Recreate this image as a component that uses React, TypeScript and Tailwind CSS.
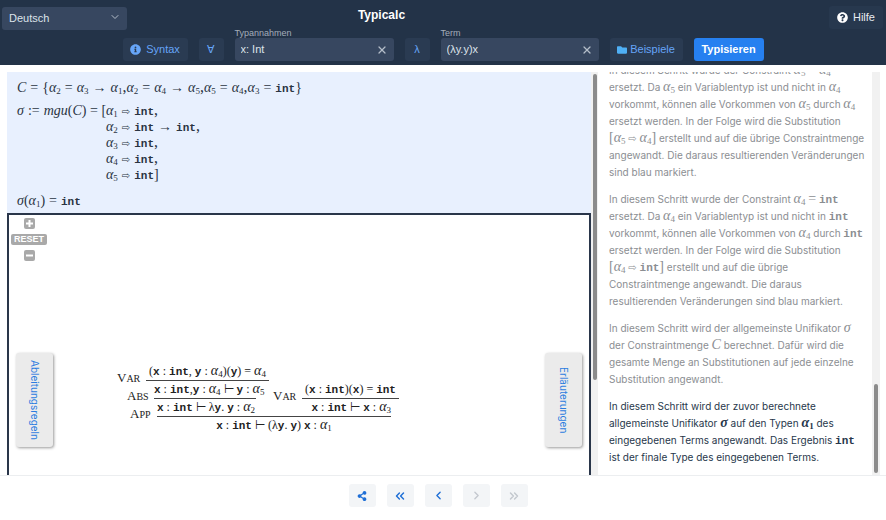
import React from "react";
import { ChevronDown, ChevronLeft, ChevronRight, ChevronsLeft, ChevronsRight, X } from "lucide-react";
import { FaShareAlt, FaInfoCircle, FaQuestionCircle, FaFolder } from "react-icons/fa";

type Kids = { children?: React.ReactNode };

const Tt = ({ children }: Kids) => (
  <span className="font-['Liberation_Mono',monospace] text-[11px] leading-[0px] font-bold">{children}</span>
);

const It = ({ children }: Kids) => <i className="font-['Liberation_Serif',serif] text-[14px] leading-[0px]">{children}</i>;

const Rm = ({ children }: Kids) => <span className="font-['Liberation_Serif',serif] text-[14px] leading-[0px]">{children}</span>;

const Alpha = ({ n }: { n: number }) => (
  <span className="font-['Liberation_Serif',serif] leading-[0px] whitespace-nowrap">
    <i className="text-[14px]">α</i>
    <sub className="text-[9px]">{n}</sub>
  </span>
);

const Maps = () => <span className="font-['DejaVu_Sans',sans-serif] text-[10px] leading-[0px]">⇨</span>;

const Int = () => <Tt>int</Tt>;

function Field({ id, label, value, width }: { id: string; label: string; value: string; width: string }) {
  return (
    <div className={width}>
      <label htmlFor={id} className="block text-[9px] leading-[10px] text-[#a3adba]">
        {label}
      </label>
      <div className="flex h-[23px] items-center rounded-[3px] bg-[#374760] pr-[6px] pl-[6px]">
        <input id={id} defaultValue={value} className="w-full min-w-0 bg-transparent text-[11px] text-[#dde3ea] outline-none" />
        <button aria-label="Leeren" className="text-[#b4bdc9]">
          <X size={12} strokeWidth={2.5} />
        </button>
      </div>
    </div>
  );
}

const darkButton = "flex h-[23px] items-center justify-center rounded-[3px] bg-[#2a3b52] text-[11px] text-[#66a5f8]";

function Header() {
  return (
    <header className="bg-[#233348] pt-[5px] pb-[4px]">
      <div className="grid h-[23px] grid-cols-[1fr_auto_1fr] items-center pr-[3px] pl-[2px]">
        <div className="relative w-[125px]">
          <select aria-label="Sprache" className="h-[23px] w-full appearance-none rounded-[3px] bg-[#374760] pl-[7px] text-[11px] text-[#dde3ea]">
            <option>Deutsch</option>
            <option>English</option>
          </select>
          <ChevronDown size={12} className="pointer-events-none absolute top-[6px] right-[6px] text-[#b4bdc9]" />
        </div>
        <h1 className="mr-[122px] self-start text-[12px] leading-[20px] font-bold text-white">Typicalc</h1>
        <button className="flex h-[23px] w-[54px] items-center justify-center gap-[5px] justify-self-end rounded-[3px] bg-[#27384e] text-[11px] text-[#e8ecf1]">
          <FaQuestionCircle size={11} className="text-white" />
          Hilfe
        </button>
      </div>
      <div className="flex items-end justify-center gap-[11px]">
        <button className={`${darkButton} w-[65px] gap-[5px]`}>
          <FaInfoCircle size={11} />
          Syntax
        </button>
        <button className={`${darkButton} w-[25px]`}>∀</button>
        <Field id="types" label="Typannahmen" value="x: Int" width="w-[159px]" />
        <button className={`${darkButton} w-[25px]`}>λ</button>
        <Field id="term" label="Term" value="(λy.y)x" width="w-[158px]" />
        <button className={`${darkButton} w-[73px] gap-[3px]`}>
          <FaFolder size={10} className="text-[#4fb0f5]" />
          Beispiele
        </button>
        <button className="h-[23px] w-[70px] rounded-[3px] bg-[#2680f0] text-[11px] font-bold text-white">Typisieren</button>
      </div>
    </header>
  );
}

function Constraints() {
  return (
    <section className="h-[141px] bg-[#e8f0fe] pt-[7px] pl-[10px] font-['Liberation_Serif',serif] text-[16px] leading-[16px] text-[#2a3442]">
      <p className="whitespace-nowrap">
        <It>C</It> <Rm>=</Rm> <Rm>{"{"}</Rm>
        <Alpha n={2} /> <Rm>=</Rm> <Alpha n={3} /> <Rm>→</Rm> <Alpha n={1} />,<Alpha n={2} /> <Rm>=</Rm> <Alpha n={4} /> <Rm>→</Rm>{" "}
        <Alpha n={5} />,<Alpha n={5} /> <Rm>=</Rm> <Alpha n={4} />,<Alpha n={3} /> <Rm>=</Rm> <Int />
        <Rm>{"}"}</Rm>
      </p>
      <div className="mt-[7px] grid w-max grid-cols-[auto_auto]">
        <p className="w-[89px] whitespace-nowrap">
          <It>σ</It> <Rm>:=</Rm> <It>mgu</It><Rm>(</Rm><It>C</It><Rm>) = [</Rm>
        </p>
        <div>
          <p><Alpha n={1} /> <Maps /> <Int />,</p>
          <p><Alpha n={2} /> <Maps /> <Int /> <Rm>→</Rm> <Int />,</p>
          <p><Alpha n={3} /> <Maps /> <Int />,</p>
          <p><Alpha n={4} /> <Maps /> <Int />,</p>
          <p><Alpha n={5} /> <Maps /> <Int /><Rm>]</Rm></p>
        </div>
      </div>
      <p className="mt-[10px]">
        <It>σ</It><Rm>(</Rm><Alpha n={1} /><Rm>)</Rm> <Rm>=</Rm> <Int />
      </p>
    </section>
  );
}

const RuleName = ({ children, width }: Kids & { width: string }) => (
  <span className={`${width} translate-y-[6px] text-[13px]`}>
    {children}
  </span>
);

const Small = ({ children }: Kids) => <span className="text-[10px]">{children}</span>;

function ProofTree() {
  return (
    <div className="mt-[10px] w-[282px] font-['Liberation_Serif',serif] text-[12px] leading-[17px] whitespace-nowrap text-[#222]">
      <div className="flex h-[18px]">
        <RuleName width="w-[29px]">V<Small>AR</Small></RuleName>
        <span className="w-[123px] border-b border-[#444] text-center">
          (<Tt>x</Tt> : <Tt>int</Tt>, <Tt>y</Tt> : <Alpha n={4} />)(<Tt>y</Tt>) = <Alpha n={4} />
        </span>
      </div>
      <div className="flex h-[18px] pl-[10px]">
        <RuleName width="w-[27px]">A<Small>BS</Small></RuleName>
        <span className="w-[102px] border-b border-[#444]">
          <Tt>x</Tt> : <Tt>int</Tt>,<Tt>y</Tt> : <Alpha n={4} /> ⊢ <Tt>y</Tt> : <Alpha n={5} />
        </span>
        <span className="w-[17px]" />
        <RuleName width="w-[29px]">V<Small>AR</Small></RuleName>
        <span className="w-[97px] border-b border-[#444] text-center">
          (<Tt>x</Tt> : <Tt>int</Tt>)(<Tt>x</Tt>) = <Tt>int</Tt>
        </span>
      </div>
      <div className="flex h-[18px] pl-[13px]">
        <RuleName width="w-[27px]">A<Small>PP</Small></RuleName>
        <span className="flex w-[234px] justify-between border-b border-[#444]">
          <span><Tt>x</Tt> : <Tt>int</Tt> ⊢ λ<Tt>y</Tt>. <Tt>y</Tt> : <Alpha n={2} /></span>
          <span><Tt>x</Tt> : <Tt>int</Tt> ⊢ <Tt>x</Tt> : <Alpha n={3} /></span>
        </span>
      </div>
      <div className="ml-[40px] w-[234px] text-center">
        <Tt>x</Tt> : <Tt>int</Tt> ⊢ (λ<Tt>y</Tt>. <Tt>y</Tt>) <Tt>x</Tt> : <Alpha n={1} />
      </div>
    </div>
  );
}

const zoomButton = "flex items-center justify-center rounded-[2px] bg-[#a9a9a9] font-bold text-white";
const sideTab =
  "flex h-[94px] w-[37px] items-center justify-center rounded-[3px] bg-[#ebebeb] font-[Inter,sans-serif] text-[10px] text-[#2b7de0] shadow-[1px_1px_3px_rgba(0,0,0,0.4)] [writing-mode:vertical-rl]";

function Canvas() {
  return (
    <section className="flex flex-1 flex-col border-2 border-b-0 border-[#2a364a] pb-[28px]">
      <div className="flex w-[40px] flex-col items-center gap-[5px] pt-[3px]">
        <button aria-label="Vergrößern" className={`${zoomButton} h-[11px] w-[11px]`}>
          <svg width="7" height="7" viewBox="0 0 7 7" stroke="white" strokeWidth="2"><path d="M3.5 0v7M0 3.5h7" /></svg>
        </button>
        <button className={`${zoomButton} h-[11px] w-[36px] text-[9px] leading-[11px]`}>RESET</button>
        <button aria-label="Verkleinern" className={`${zoomButton} h-[11px] w-[11px]`}>
          <svg width="7" height="7" viewBox="0 0 7 7" stroke="white" strokeWidth="2"><path d="M0 3.5h7" /></svg>
        </button>
      </div>
      <div className="mt-auto flex items-start px-[7px]">
        <button className={sideTab}>Ableitungsregeln</button>
        <div className="ml-[64px]"><ProofTree /></div>
        <button className={`${sideTab} ml-auto`}>Erläuterungen</button>
      </div>
    </section>
  );
}

function Explanations() {
  return (
    <section className="flex flex-1 flex-col justify-end gap-[10px] overflow-hidden pr-[6px] pb-[9px] pl-[8px] font-[Inter,sans-serif] text-[10px] leading-[17px] text-[#8b8e92]">
      <p>
        In diesem Schritt wurde der Constraint <Alpha n={5} /> <Rm>=</Rm> <Alpha n={4} /> ersetzt. Da <Alpha n={5} /> ein Variablentyp ist und nicht in{" "}
        <Alpha n={4} /> vorkommt, können alle Vorkommen von <Alpha n={5} /> durch <Alpha n={4} /> ersetzt werden. In der Folge wird die Substitution{" "}
        <span className="whitespace-nowrap"><Rm>[</Rm><Alpha n={5} /> <Maps /> <Alpha n={4} /><Rm>]</Rm></span> erstellt und auf die übrige Constraintmenge angewandt. Die daraus
        resultierenden Veränderungen sind blau markiert.
      </p>
      <p>
        In diesem Schritt wurde der Constraint <Alpha n={4} /> <Rm>=</Rm> <Int /> ersetzt. Da <Alpha n={4} /> ein Variablentyp ist und nicht in <Int /> vorkommt,
        können alle Vorkommen von <Alpha n={4} /> durch <Int /> ersetzt werden. In der Folge wird die Substitution{" "}
        <span className="whitespace-nowrap"><Rm>[</Rm><Alpha n={4} /> <Maps /> <Int /><Rm>]</Rm></span> erstellt und auf die übrige Constraintmenge angewandt. Die daraus
        resultierenden Veränderungen sind blau markiert.
      </p>
      <p>
        In diesem Schritt wird der allgemeinste Unifikator <It>σ</It> der Constraintmenge <It>C</It> berechnet. Dafür wird die gesamte Menge an Substitutionen auf
        jede einzelne Substitution angewandt.
      </p>
      <p className="text-[#27374b]">
        In diesem Schritt wird der zuvor berechnete allgemeinste Unifikator <b><It>σ</It></b> auf den Typen <b><Alpha n={1} /></b> des eingegebenen Terms
        angewandt. Das Ergebnis <Int /> ist der finale Type des eingegebenen Terms.
      </p>
    </section>
  );
}

const navButton = "flex h-[23px] w-[27px] items-center justify-center rounded-[3px] bg-[#f3f5f7]";

export default function App() {
  return (
    <div className="flex h-screen flex-col bg-white font-['Liberation_Sans',sans-serif]">
      <Header />
      <main className="flex min-h-0 flex-1 border-b border-[#eceef0] pt-[7px] pr-[6px] pl-[7px]">
        <div className="flex flex-[591]">
          <div className="flex flex-1 flex-col">
            <Constraints />
            <Canvas />
          </div>
          <div className="w-[7px] bg-[#f1f1f1] pt-[2px] pl-[2px]">
            <div className="h-[306px] w-[4px] rounded-full bg-[#8b8b8b]" />
          </div>
        </div>
        <div className="ml-[3px] flex flex-[279]">
          <Explanations />
          <div className="flex w-[8px] flex-col justify-end bg-[#f1f1f1] pb-[2px] pl-[2px]">
            <div className="h-[89px] w-[4px] rounded-full bg-[#8b8b8b]" />
          </div>
        </div>
      </main>
      <footer className="flex justify-center gap-[11px] pt-[8px] pr-[10px] pb-[13px]">
        <button aria-label="Teilen" className={`${navButton} text-[#1f6fd6]`}><FaShareAlt size={10} /></button>
        <button aria-label="Erster Schritt" className={`${navButton} text-[#1f6fd6]`}><ChevronsLeft size={14} strokeWidth={2.5} /></button>
        <button aria-label="Vorheriger Schritt" className={`${navButton} text-[#1f6fd6]`}><ChevronLeft size={13} strokeWidth={2.5} /></button>
        <button aria-label="Nächster Schritt" disabled className={`${navButton} text-[#c3c8ce]`}><ChevronRight size={13} strokeWidth={2.5} /></button>
        <button aria-label="Letzter Schritt" disabled className={`${navButton} text-[#c3c8ce]`}><ChevronsRight size={14} strokeWidth={2.5} /></button>
      </footer>
    </div>
  );
}
